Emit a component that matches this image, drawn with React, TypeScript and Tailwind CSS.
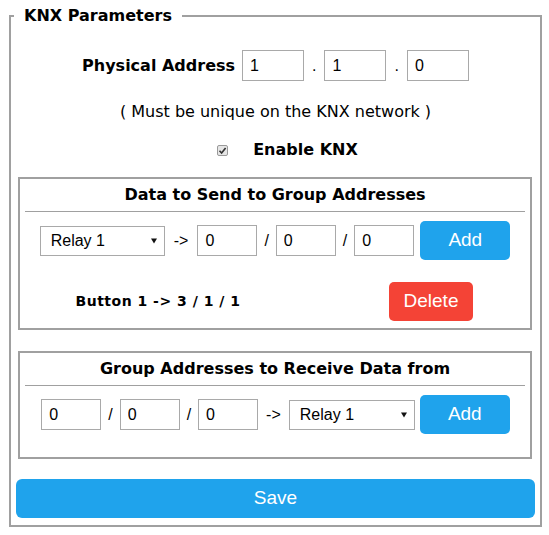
const verdana = { fontFamily: '"DejaVu Sans", Verdana, sans-serif' };

const Field = ({ value, w = 'w-[60px]' }: { value: string; w?: string }) => (
  <input
    type="text"
    defaultValue={value}
    className={`${w} h-[31px] border border-[#a9a9a9] bg-white pl-[7px] text-[16px] text-black font-['Liberation_Sans',Arial,sans-serif] outline-none`}
  />
);

const Select = ({ w }: { w: string }) => (
  <div className={`relative ${w} h-[30px]`}>
    <select
      defaultValue="1"
      className="h-full w-full appearance-none border border-[#a9a9a9] bg-white pl-[10px] text-[16px] text-black font-['Liberation_Sans',Arial,sans-serif] outline-none"
    >
      <option value="1">Relay 1</option>
      <option value="2">Relay 2</option>
    </select>
    <svg className="pointer-events-none absolute right-[8px] top-[12px]" width="6" height="6" viewBox="0 0 6 6">
      <path d="M0 0.5 H6 L3 5.5 Z" fill="#111" />
    </svg>
  </div>
);

const Sep = ({ ch, className = '' }: { ch: string; className?: string }) => (
  <span className={`text-[16px] text-black font-['Liberation_Sans',Arial,sans-serif] ${className}`}>{ch}</span>
);

const Btn = ({ label, color, w }: { label: string; color: string; w: string }) => (
  <button
    className={`${w} h-[39px] rounded-[5px] ${color} text-[19px] text-white font-['Liberation_Sans',Arial,sans-serif]`}
  >
    {label}
  </button>
);

export default function App() {
  return (
    <div className="w-[549px] h-[535px] bg-white pl-[9px] pt-[6px]" style={verdana}>
      <fieldset className="w-[533px] border-2 border-[#a0a0a0] pb-[7px]">
        <legend className="ml-[3px] px-[10px] text-[16px] font-bold leading-[19px] text-black">KNX Parameters</legend>

        <div className="mt-[25px] flex items-center justify-center">
          <span className="text-[16px] font-bold text-black">Physical Address</span>
          <span className="ml-[7px]"><Field value="1" w="w-[62px]" /></span>
          <Sep ch="." className="mx-[8px]" />
          <Field value="1" w="w-[62px]" />
          <Sep ch="." className="mx-[8px]" />
          <Field value="0" w="w-[62px]" />
        </div>

        <p className="mt-[21px] text-center text-[16px] leading-[20px] text-black">( Must be unique on the KNX network )</p>

        <div className="mt-[18px] flex h-[20px] items-center justify-center pl-[24px]">
          <span className="flex h-[11px] w-[11px] items-center justify-center rounded-[2px] border border-[#9a9a9a] bg-[#e6e6e6]">
            <svg width="9" height="9" viewBox="0 0 9 9">
              <path d="M1.5 4.8 L3.6 7 L7.6 2" stroke="#333" strokeWidth="1.6" fill="none" />
            </svg>
          </span>
          <span className="ml-[25px] text-[16px] font-bold text-black">Enable KNX</span>
        </div>

        <fieldset className="mt-[17px] ml-[7px] w-[514px] border-2 border-[#a0a0a0] pt-[6px] pb-[7px]">
          <h3 className="text-center text-[16px] font-bold leading-[20px] text-black">Data to Send to Group Addresses</h3>
          <div className="mx-[5px] mt-[6px] border-t border-[#a0a0a0]" />
          <div className="mt-[9px] flex h-[39px] items-center justify-center">
            <Select w="w-[125px]" />
            <Sep ch="->" className="mx-[9px]" />
            <Field value="0" />
            <Sep ch="/" className="mx-[7px]" />
            <Field value="0" />
            <Sep ch="/" className="mx-[7px]" />
            <Field value="0" />
            <span className="ml-[6px]"><Btn label="Add" color="bg-[#1fa3ec]" w="w-[90px]" /></span>
          </div>
          <div className="mt-[22px] flex items-center">
            <div className="ml-[3px] w-[270px] text-center text-[14px] font-bold tracking-[0.5px] text-black">Button 1 -&gt; 3 / 1 / 1</div>
            <span className="ml-[96px]"><Btn label="Delete" color="bg-[#f44336]" w="w-[84px]" /></span>
          </div>
        </fieldset>

        <fieldset className="mt-[21px] ml-[7px] w-[514px] border-2 border-[#a0a0a0] pt-[6px] pb-[23px]">
          <h3 className="text-center text-[16px] font-bold leading-[20px] text-black">Group Addresses to Receive Data from</h3>
          <div className="mx-[5px] mt-[6px] border-t border-[#a0a0a0]" />
          <div className="mt-[9px] flex h-[39px] items-center justify-center pl-[1px]">
            <Field value="0" />
            <Sep ch="/" className="mx-[7px]" />
            <Field value="0" />
            <Sep ch="/" className="mx-[7px]" />
            <Field value="0" />
            <Sep ch="->" className="mx-[8px]" />
            <Select w="w-[126px]" />
            <span className="ml-[5px]"><Btn label="Add" color="bg-[#1fa3ec]" w="w-[90px]" /></span>
          </div>
        </fieldset>

        <div className="mt-[20px] px-[5px]">
          <button className="h-[39px] w-full rounded-[6px] bg-[#1fa3ec] text-[19px] text-white font-['Liberation_Sans',Arial,sans-serif]">
            Save
          </button>
        </div>
      </fieldset>
    </div>
  );
}
